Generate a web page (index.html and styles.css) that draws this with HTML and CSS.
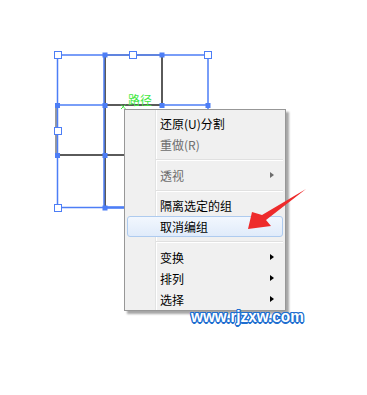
FILE: index.html
```html
<!DOCTYPE html>
<html lang="zh-CN">
<head>
  <meta charset="UTF-8" />
  <title>取消编组</title>
  <link rel="stylesheet" href="styles.css">
</head>
<body>
  <div class="canvas">
    <!-- artwork: 3x3 grid with selection -->
    <svg class="art" width="367" height="395" viewBox="0 0 367 395">
      <g fill="none" stroke="#5a5a5a" stroke-width="2">
        <line x1="105" y1="55" x2="105" y2="208" />
        <line x1="162" y1="55" x2="162" y2="105" />
        <line x1="105" y1="105" x2="162" y2="105" />
        <line x1="57" y1="155" x2="124" y2="155" />
      </g>
      <g fill="none" stroke="#9a9a9a" stroke-width="2">
        <line x1="105" y1="55" x2="162" y2="55" />
        <line x1="56" y1="105" x2="56" y2="155" />
      </g>
      <g fill="none" stroke="#4d7ef6" stroke-width="1.5">
        <rect x="57.5" y="55" width="150.5" height="152.5" />
        <line x1="57" y1="105" x2="105" y2="105" />
        <line x1="162" y1="105" x2="208" y2="105" />
        <line x1="104" y1="55" x2="104" y2="208" />
        <line x1="105" y1="207.5" x2="124" y2="207.5" stroke-width="2.5" />
      </g>
      <g fill="#4d7ef6">
        <rect x="102.5" y="52.5" width="5" height="5" />
        <rect x="159.5" y="52.5" width="5" height="5" />
        <rect x="55" y="103" width="5" height="5" />
        <rect x="102.5" y="103" width="5" height="5" />
        <rect x="159.5" y="103" width="5" height="5" />
        <rect x="205.5" y="103" width="5" height="5" />
        <rect x="55" y="153" width="5" height="5" />
        <rect x="102.5" y="153" width="5" height="5" />
        <rect x="102.5" y="205.5" width="5" height="5" />
      </g>
      <g fill="#fff" stroke="#4d7ef6" stroke-width="1">
        <rect x="54.5" y="51.5" width="7" height="7" />
        <rect x="129.5" y="51.5" width="7" height="7" />
        <rect x="204.5" y="51.5" width="7" height="7" />
        <rect x="54.5" y="127.5" width="7" height="7" />
        <rect x="54.5" y="204.5" width="7" height="7" />
      </g>
      <g stroke="#44e844" stroke-width="1">
        <line x1="121" y1="104.5" x2="125.5" y2="109" />
        <line x1="125.5" y1="104.5" x2="121" y2="109" />
      </g>
      <text class="path-label" x="128" y="104.5">路径</text>
    </svg>

    <!-- context menu -->
    <div class="menu">
      <div class="menu-item">还原(U)分割</div>
      <div class="menu-item disabled">重做(R)</div>
      <div class="menu-sep"></div>
      <div class="menu-item disabled has-sub">透视</div>
      <div class="menu-sep"></div>
      <div class="menu-item">隔离选定的组</div>
      <div class="menu-item active">取消编组</div>
      <div class="menu-sep"></div>
      <div class="menu-item has-sub">变换</div>
      <div class="menu-item has-sub">排列</div>
      <div class="menu-item has-sub">选择</div>
    </div>

    <!-- red pointer arrow -->
    <svg class="pointer" width="367" height="395" viewBox="0 0 367 395">
      <polygon fill="#ee2b2b" points="306,189 262,215 252,212 248,229 271,226 266,220" />
    </svg>

    <div class="watermark">www.rjzxw.com</div>
  </div>
</body>
</html>
```

FILE: styles.css
```css
body {
  margin: 0;
  background: #fff;
  font-family: "Noto Sans CJK SC", "Liberation Sans", sans-serif;
}

.canvas {
  position: relative;
  width: 367px;
  height: 395px;
  overflow: hidden;
}

.art {
  display: block;
}

.path-label {
  font-family: "Noto Sans CJK SC", sans-serif;
  font-size: 12px;
  fill: #44e844;
}

/* Context menu */
.menu {
  position: absolute;
  left: 124px;
  top: 109px;
  width: 162px;
  box-sizing: border-box;
  padding: 3px 0 0;
  background: #f0f0f0;
  border: 1px solid #979797;
  box-shadow: 3px 3px 2px rgba(0, 0, 0, 0.35);
}

.menu::before {
  content: '';
  position: absolute;
  top: 0;
  bottom: 0;
  left: 30px;
  width: 1px;
  background: #e2e3e3;
  border-right: 1px solid #fff;
}

.menu-item {
  position: relative;
  height: 21px;
  margin: 0 2px;
  padding-left: 32px;
  font-size: 12px;
  color: #000;
  box-sizing: border-box;
  border: 1px solid transparent;
  border-radius: 3px;
  line-height: 19px;
}

.menu-item.disabled {
  color: #6d6d6d;
}

.menu-item.active {
  background: linear-gradient(#f2f7fe, #e0ebfa);
  border-color: #aecbef;
}

.has-sub::after {
  content: '';
  position: absolute;
  right: 8px;
  top: 6px;
  border-left: 4px solid #000;
  border-top: 3.5px solid transparent;
  border-bottom: 3.5px solid transparent;
}

.has-sub.disabled::after {
  border-left-color: #6d6d6d;
}

.menu-sep {
  position: relative;
  height: 9.5px;
  margin-left: 31px;
  margin-right: 2px;
}

.menu-sep::before {
  content: '';
  position: absolute;
  left: 0;
  right: 0;
  top: 4px;
  height: 1px;
  background: #e0e0e0;
  border-bottom: 1px solid #fff;
}

/* Overlays */
.pointer {
  position: absolute;
  left: 0;
  top: 0;
}

.watermark {
  position: absolute;
  left: 191px;
  top: 307px;
  font-family: "Liberation Sans", Arial, sans-serif;
  font-weight: bold;
  font-size: 17px;
  color: #fff;
  transform: scaleX(0.9);
  transform-origin: left top;
  text-shadow:
    1.5px 0 0 #1f6fd0, -1.5px 0 0 #1f6fd0, 0 1.5px 0 #1f6fd0, 0 -1.5px 0 #1f6fd0,
    1px 1px 0 #1f6fd0, -1px 1px 0 #1f6fd0, 1px -1px 0 #1f6fd0, -1px -1px 0 #1f6fd0;
}
```
